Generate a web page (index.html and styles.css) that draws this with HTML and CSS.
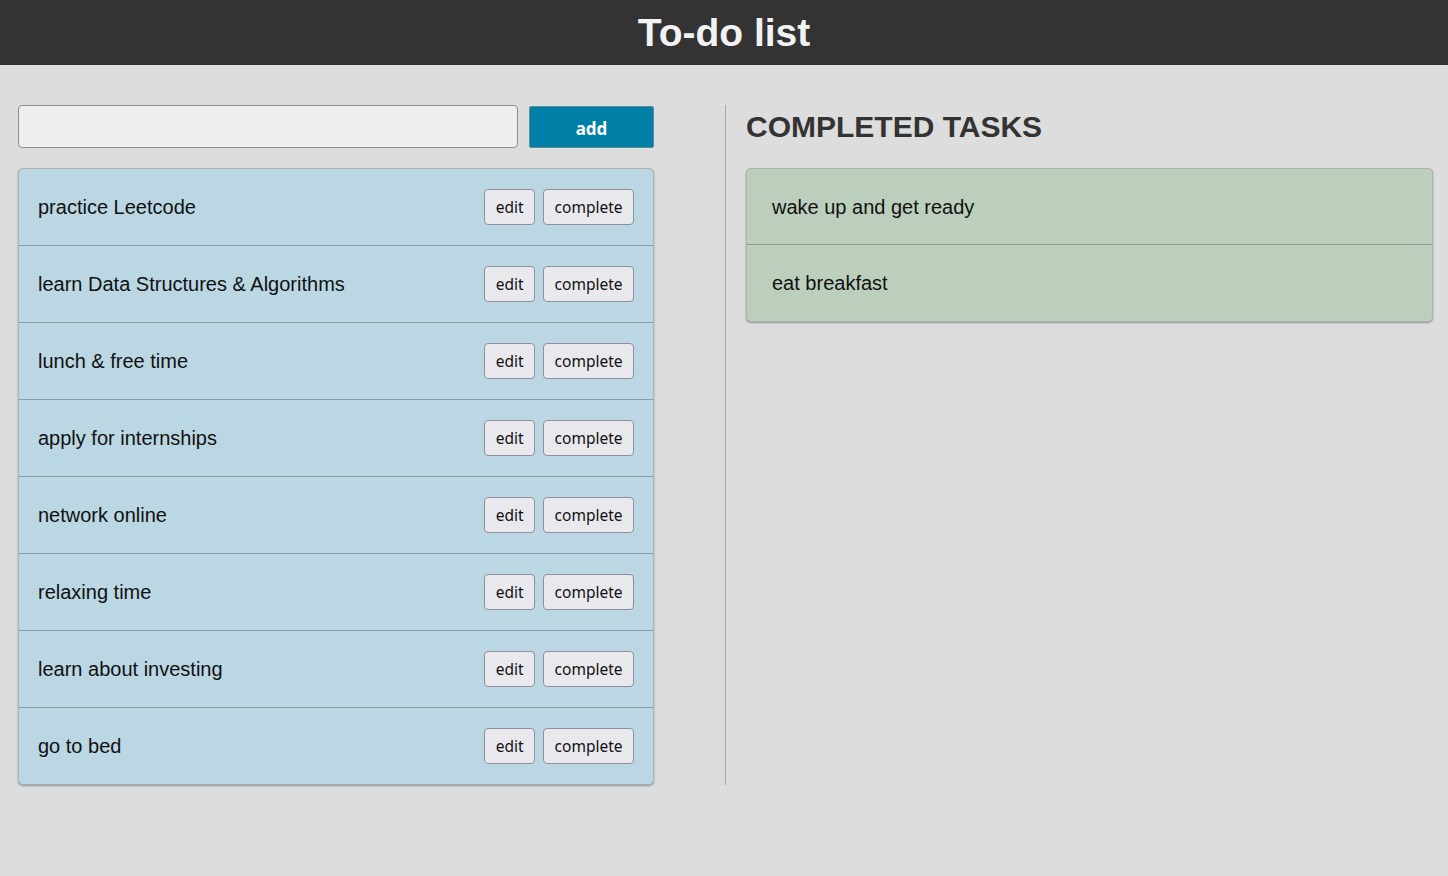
FILE: index.html
```html
<!DOCTYPE html>
<html>
<head>
<meta charset="utf-8">
<link rel="stylesheet" href="styles.css">
</head>
<body>
<header class="topbar"><h1 class="title">To-do list</h1></header>
<main class="main">
  <section class="todo-col">
    <div class="add-row">
      <input class="task-input" type="text">
      <button class="add-btn">add</button>
    </div>
    <ul class="list todo-list">
      <li class="item"><span class="item-text">practice Leetcode</span><span class="actions"><button class="btn">edit</button><button class="btn">complete</button></span></li>
      <li class="item"><span class="item-text">learn Data Structures &amp; Algorithms</span><span class="actions"><button class="btn">edit</button><button class="btn">complete</button></span></li>
      <li class="item"><span class="item-text">lunch &amp; free time</span><span class="actions"><button class="btn">edit</button><button class="btn">complete</button></span></li>
      <li class="item"><span class="item-text">apply for internships</span><span class="actions"><button class="btn">edit</button><button class="btn">complete</button></span></li>
      <li class="item"><span class="item-text">network online</span><span class="actions"><button class="btn">edit</button><button class="btn">complete</button></span></li>
      <li class="item"><span class="item-text">relaxing time</span><span class="actions"><button class="btn">edit</button><button class="btn">complete</button></span></li>
      <li class="item"><span class="item-text">learn about investing</span><span class="actions"><button class="btn">edit</button><button class="btn">complete</button></span></li>
      <li class="item"><span class="item-text">go to bed</span><span class="actions"><button class="btn">edit</button><button class="btn">complete</button></span></li>
    </ul>
  </section>
  <section class="done-col">
    <h2 class="done-title">COMPLETED TASKS</h2>
    <ul class="list done-list">
      <li class="item done-item"><span class="item-text">wake up and get ready</span></li>
      <li class="item done-item"><span class="item-text">eat breakfast</span></li>
    </ul>
  </section>
</main>
</body>
</html>
```
FILE: styles.css
```css
* { box-sizing: border-box; }
html, body { margin: 0; padding: 0; }
body {
  background: #dddddd;
  font-family: "Liberation Sans", Arial, sans-serif;
  color: #111;
  height: 876px;
}
.topbar {
  background: #333333;
  height: 65px;
  display: flex;
  align-items: center;
  justify-content: center;
}
.title {
  margin: 0;
  color: #f2f2f2;
  font-size: 39px;
  font-weight: bold;
  line-height: 1;
}
.main {
  display: flex;
  padding: 40px 15px 0 18px;
}
.todo-col {
  width: 636px;
  flex: none;
  margin-right: 71px;
}
.add-row {
  display: flex;
  align-items: center;
  gap: 11px;
  height: 43px;
  margin-bottom: 20px;
}
.task-input {
  width: 500px;
  height: 43px;
  background: #eeeeee;
  border: 1px solid #8d8d8d;
  border-radius: 4px;
  margin: 0;
}
.add-btn {
  width: 125px;
  height: 42px;
  background: #0080a7;
  color: #fff;
  border: 1px solid #5d8a99;
  border-radius: 2px;
  font-family: "Noto Sans", "Open Sans", sans-serif;
  font-weight: bold;
  font-size: 17px;
  margin: 0;
  padding: 3px 0 0;
}
.list {
  list-style: none;
  margin: 0;
  padding: 0;
  border: 1px solid #a4b2b9;
  border-radius: 5px;
  overflow: hidden;
  box-shadow: 0 1px 2px rgba(0,0,0,0.35);
}
.todo-list { background: #bad7e3; }
.item {
  display: flex;
  align-items: center;
  justify-content: space-between;
  height: 77px;
  padding: 0 19px;
  border-top: 1px solid #8a9ba4;
  font-size: 20px;
}
.item:first-child { border-top: none; height: 76px; }
.item-text { padding-top: 1px; }
.actions {
  display: flex;
  gap: 8px;
}
.btn {
  height: 36px;
  background: #e9e9ed;
  border: 1px solid #8f8f9d;
  border-radius: 4px;
  font-family: "Noto Sans", "Open Sans", sans-serif;
  font-size: 15.5px;
  color: #111;
  padding: 0 10.5px 1px;
  margin: 0;
}
.done-col {
  flex: 1;
  border-left: 1px solid #a8a8a8;
  padding-left: 20px;
  height: 680px;
}
.done-title {
  margin: 3px 0 0;
  height: 60px;
  font-size: 30px;
  font-weight: bold;
  color: #333333;
  line-height: 38px;
}
.done-list { background: #bccfbc; border-color: #a9b5a9; }
.done-item { padding-left: 25px; border-top-color: #8e9a8e; }
.done-item:first-child { height: 75px; }
```
